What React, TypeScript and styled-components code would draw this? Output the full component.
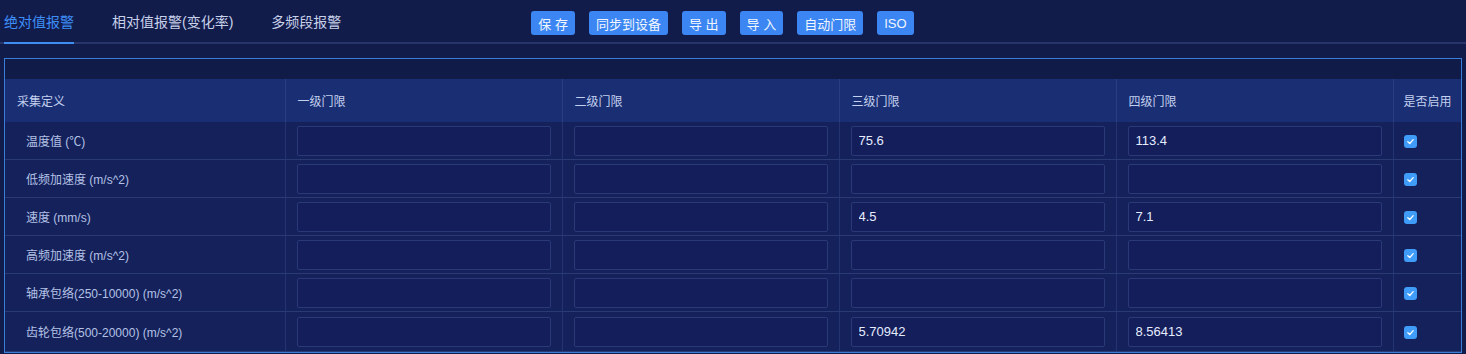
import React from 'react';
import styled, { createGlobalStyle } from 'styled-components';

const GlobalStyle = createGlobalStyle`
  html, body {
    margin: 0;
    padding: 0;
    background: #121c4b;
    font-family: "Liberation Sans", "Noto Sans CJK SC", Arial, sans-serif;
  }
`;

const Page = styled.div`
  width: 1466px;
  height: 354px;
  overflow: hidden;
  background: #121c4b;
`;

const TopBar = styled.div`
  display: flex;
  align-items: center;
  height: 42px;
  border-bottom: 2px solid #28356b;
  padding-left: 4px;
`;

const Tabs = styled.div`
  display: flex;
  gap: 38px;
  height: 100%;
`;

const Tab = styled.div<{ $active?: boolean }>`
  display: flex;
  align-items: center;
  height: 42px;
  margin-bottom: -2px;
  border-bottom: 2px solid ${p => (p.$active ? '#3f8df0' : 'transparent')};
  font-size: 14px;
  color: ${p => (p.$active ? '#3d8ef6' : '#c8d1ea')};
  cursor: pointer;
`;

const Actions = styled.div`
  display: flex;
  gap: 14px;
  margin-left: 190px;
  margin-top: 4px;
`;

const Button = styled.button`
  height: 24px;
  padding: 0 7px;
  border: none;
  border-radius: 3px;
  background: #3b86f2;
  color: #f2f6ff;
  font-family: inherit;
  font-size: 13px;
  cursor: pointer;
`;

const TableWrap = styled.div`
  margin: 14px 4px 0;
  border: 1px solid #3b7ed8;
  background: #111b48;
  padding-top: 20px;
`;

const Table = styled.table`
  width: 100%;
  border-collapse: collapse;
  table-layout: fixed;
`;

const Th = styled.th<{ $pad?: number }>`
  height: 43px;
  padding: 0 0 0 ${p => p.$pad ?? 12}px;
  background: #1a2f73;
  color: #c4d0ef;
  font-size: 12px;
  font-weight: normal;
  text-align: left;
  border-left: 1px solid #2a3d80;
  &:first-child {
    border-left: none;
  }
`;

const Td = styled.td<{ $pad?: number }>`
  height: 37px;
  padding: 0 ${p => (p.$pad !== undefined ? 0 : 11)}px 0 ${p => p.$pad ?? 11}px;
  background: #15215a;
  border-left: 1px solid #243471;
  border-bottom: 1px solid #293a74;
  &:first-child {
    border-left: none;
  }
  tr:last-child > & {
    height: 39px;
  }
`;

const Label = styled.span`
  color: #b3c1e6;
  font-size: 12px;
`;

const Input = styled.input`
  box-sizing: border-box;
  display: block;
  width: 100%;
  height: 30px;
  padding: 0 7px;
  background: #131e5a;
  border: 1px solid #2a3a78;
  border-radius: 2px;
  color: #e6ecff;
  font-family: inherit;
  font-size: 13px;
  outline: none;
`;

const Check = styled.span`
  display: inline-flex;
  align-items: center;
  justify-content: center;
  width: 13px;
  height: 13px;
  border-radius: 3px;
  background: #409cf9;
  vertical-align: middle;
`;

const rows = [
  { name: '温度值 (℃)', v3: '75.6', v4: '113.4' },
  { name: '低频加速度 (m/s^2)', v3: '', v4: '' },
  { name: '速度 (mm/s)', v3: '4.5', v4: '7.1' },
  { name: '高频加速度 (m/s^2)', v3: '', v4: '' },
  { name: '轴承包络(250-10000) (m/s^2)', v3: '', v4: '' },
  { name: '齿轮包络(500-20000) (m/s^2)', v3: '5.70942', v4: '8.56413' },
];

const App: React.FC = () => {
  return (
    <Page>
      <GlobalStyle />
      <TopBar>
        <Tabs>
          <Tab $active>绝对值报警</Tab>
          <Tab>相对值报警(变化率)</Tab>
          <Tab>多频段报警</Tab>
        </Tabs>
        <Actions>
          <Button>保 存</Button>
          <Button>同步到设备</Button>
          <Button>导 出</Button>
          <Button>导 入</Button>
          <Button>自动门限</Button>
          <Button>ISO</Button>
        </Actions>
      </TopBar>

      <TableWrap>
        <Table>
          <colgroup>
            <col style={{ width: 280 }} />
            <col style={{ width: 277 }} />
            <col style={{ width: 277 }} />
            <col style={{ width: 277 }} />
            <col style={{ width: 277 }} />
            <col />
          </colgroup>
          <thead>
            <tr>
              <Th>采集定义</Th>
              <Th>一级门限</Th>
              <Th>二级门限</Th>
              <Th>三级门限</Th>
              <Th>四级门限</Th>
              <Th $pad={10}>是否启用</Th>
            </tr>
          </thead>
          <tbody>
            {rows.map(r => (
              <tr key={r.name}>
                <Td $pad={21}>
                  <Label>{r.name}</Label>
                </Td>
                <Td>
                  <Input defaultValue="" />
                </Td>
                <Td>
                  <Input defaultValue="" />
                </Td>
                <Td>
                  <Input defaultValue={r.v3} />
                </Td>
                <Td>
                  <Input defaultValue={r.v4} />
                </Td>
                <Td $pad={10}>
                  <Check>
                    <svg width="9" height="9" viewBox="0 0 10 10">
                      <path d="M2 5.2 L4.2 7.2 L8 3" fill="none" stroke="#fff" strokeWidth="1.4" strokeLinecap="round" strokeLinejoin="round" />
                    </svg>
                  </Check>
                </Td>
              </tr>
            ))}
          </tbody>
        </Table>
      </TableWrap>
    </Page>
  );
};

export default App;
